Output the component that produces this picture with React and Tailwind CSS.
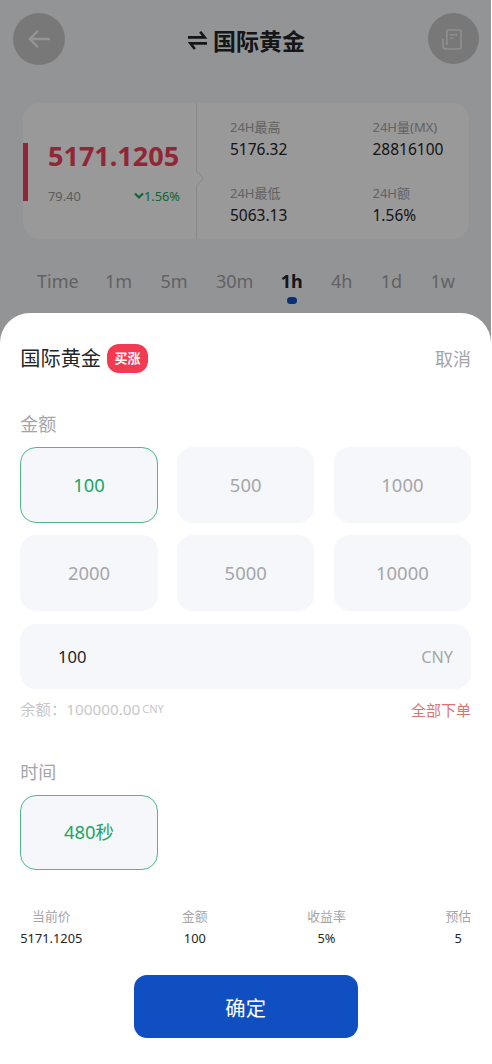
const stats = [
  ['24H最高', '5176.32'],
  ['24H量(MX)', '28816100'],
  ['24H最低', '5063.13'],
  ['24H额', '1.56%'],
];
const tabs = ['Time', '1m', '5m', '30m', '1h', '4h', '1d', '1w'];
const amounts = ['100', '500', '1000', '2000', '5000', '10000'];
const summary = [
  ['当前价', '5171.1205'],
  ['金额', '100'],
  ['收益率', '5%'],
  ['预估', '5'],
];

function Option({ label, active }) {
  return (
    <button
      className={
        active
          ? 'flex h-[75.5px] items-center justify-center rounded-[16px] border border-[#4dbb87] bg-[#f5f7fb] text-[18.4px] leading-6 text-[#1ba661]'
          : 'flex h-[75.5px] items-center justify-center rounded-[16px] bg-[#f5f7fb] text-[18.4px] leading-6 text-[#a5a6a9]'
      }
    >
      {label}
    </button>
  );
}

function Header() {
  return (
    <header className="flex h-[65px] items-start justify-between pt-[13px] pr-[12px] pl-[13px]">
      <button className="flex size-[52px] items-center justify-center rounded-full bg-[#c9c9c9]">
        <svg className="-ml-[1px]" width="24" height="20" viewBox="0 0 24 20" fill="none" stroke="#f8f8f8" strokeWidth="2.3">
          <path d="M11 1.8 2.8 10l8.2 8.2M2.8 10H23" />
        </svg>
      </button>
      <h1 className="flex h-[56px] items-center gap-[6px] text-[23px] leading-7 font-bold text-[#242527]">
        <svg className="-mt-[2px]" width="19" height="19" viewBox="0 0 19 19" fill="none" stroke="#242527" strokeWidth="2.6">
          <path d="M0 6.4h16.6L12.2.8M19 12.4H2.4L6.8 18" />
        </svg>
        国际黄金
      </h1>
      <button className="flex size-[51px] items-center justify-center rounded-full bg-[#c9c9c9]">
        <svg className="-ml-[3px] mt-[2px]" width="20" height="21" viewBox="0 0 20 21" fill="none" stroke="#eeeeee" strokeWidth="1.6">
          <path d="M4.8 16V3a2 2 0 0 1 2-2H17a2 2 0 0 1 2 2v15a2 2 0 0 1-2 2H4a3 3 0 0 1-3-3V9.8M8 5.7h7M8 9.3h3.5" />
        </svg>
      </button>
    </header>
  );
}

function Market() {
  return (
    <section className="mt-[38px] ml-[23px] flex h-[136px] w-[446px] items-center rounded-[17px] bg-white">
      <div className="mt-[2px] h-[58px] w-[5px] bg-[#f0405a]" />
      <div className="flex h-full w-[152px] flex-col pt-[38px] pl-[20px]">
        <div className="text-[27px] leading-[30px] font-bold text-[#f0405a]">5171.1205</div>
        <div className="mt-[16px] flex justify-between text-[12.8px] leading-[18px] text-[#999]">
          <span>79.40</span>
          <span className="flex items-center text-[#1ba661]">
            <svg width="10" height="8" viewBox="0 0 10 8" fill="none" stroke="#1ba661" strokeWidth="2.2">
              <path d="m1 1.5 4 4 4-4" />
            </svg>
            1.56%
          </span>
        </div>
      </div>
      <svg className="ml-[16px]" width="9" height="136" viewBox="0 0 9 136" fill="none" stroke="#e3e3e5">
        <path d="M.5 0v68l7 7.5-7 7.5v53" />
      </svg>
      <div className="grid h-full grid-cols-[142.5px_1fr] grid-rows-[66px_1fr] pt-[15px] pl-[25px]">
        {stats.map(([label, value]) => (
          <div key={label}>
            <div className="text-[13px] leading-[18px] text-[#a3a3a5]">{label}</div>
            <div className="mt-[2px] text-[15.5px] leading-[22px] text-[#242527]">{value}</div>
          </div>
        ))}
      </div>
    </section>
  );
}

function Periods() {
  return (
    <nav className="mt-[30px] flex justify-between pr-[36px] pl-[37px] text-[18px] leading-6 text-[#a3a3a6]">
      {tabs.map((tab) =>
        tab === '1h' ? (
          <div key={tab} className="-ml-[1px] flex flex-col items-center font-bold text-[#242527]">
            {tab}
            <span className="mt-[4px] h-[7px] w-[10px] rounded-[4px] bg-[#104fc1]" />
          </div>
        ) : (
          <div key={tab} className="first:-mr-[2px]">
            {tab}
          </div>
        )
      )}
    </nav>
  );
}

function OrderSheet() {
  return (
    <section className="absolute inset-x-0 top-[313px] h-[751px] rounded-t-[30px] bg-white pt-[31px] pr-[20px] pl-[20.3px]">
      <div className="flex h-[29px] items-center">
        <h2 className="-mt-[2px] text-[20.2px] leading-7 text-[#242527]">国际黄金</h2>
        <span className="ml-[6px] flex h-[29px] w-[41px] items-center justify-center rounded-[12px] bg-[#f23b50] pb-[1px] text-[13px] leading-5 font-bold text-white">
          买涨
        </span>
        <button className="ml-auto text-[18px] leading-6 text-[#a5a5a8]">取消</button>
      </div>
      <h3 className="mt-[39px] text-[18px] leading-6 text-[#a5a5a8]">金额</h3>
      <div className="mt-[11px] grid grid-cols-3 gap-x-[19.5px] gap-y-[12.5px]">
        {amounts.map((amount) => (
          <Option key={amount} label={amount} active={amount === '100'} />
        ))}
      </div>
      <div className="mt-[13px] flex h-[65px] items-center justify-between rounded-[16px] bg-[#f5f7fb] pr-[18px] pl-[37.7px] leading-6">
        <span className="mt-[2px] text-[16.6px] text-[#242527]">100</span>
        <span className="mt-[1px] text-[16.2px] text-[#a5a6a9]">CNY</span>
      </div>
      <div className="mt-[10px] flex h-[20px] items-center text-[15.3px] leading-5 text-[#c8c8ca]">
        <span>余额：100000.00</span>
        <span className="ml-[2px] text-[11px]">CNY</span>
        <button className="ml-auto mt-[2px] text-[15px] text-[#dc7474]">全部下单</button>
      </div>
      <h3 className="mt-[41px] text-[18px] leading-6 text-[#a5a5a8]">时间</h3>
      <div className="mt-[11px] grid grid-cols-3 gap-x-[19.5px]">
        <Option label="480秒" active />
      </div>
      <div className="mt-[36px] flex justify-between text-center text-[12.8px] leading-[20px]">
        {summary.map(([label, value]) => (
          <div key={label}>
            <div className="text-[#a5a5a8]">{label}</div>
            <div className="mt-[2px] text-[#242527]">{value}</div>
          </div>
        ))}
      </div>
      <button className="mx-auto mt-[27px] flex h-[63px] w-[224px] items-center justify-center rounded-[13px] bg-[#104fc1] pt-[2px] text-[20.3px] leading-7 text-white">
        确定
      </button>
    </section>
  );
}

export default function App() {
  return (
    <div className="h-[1064px] w-[492px] overflow-hidden bg-white font-['Noto_Sans','Noto_Sans_CJK_SC',sans-serif]">
      <main className="relative h-[1064px] w-[491px] bg-[#f5f7fa]">
        <Header />
        <Market />
        <Periods />
        <div className="absolute inset-0 bg-black/40" />
        <OrderSheet />
      </main>
    </div>
  );
}
